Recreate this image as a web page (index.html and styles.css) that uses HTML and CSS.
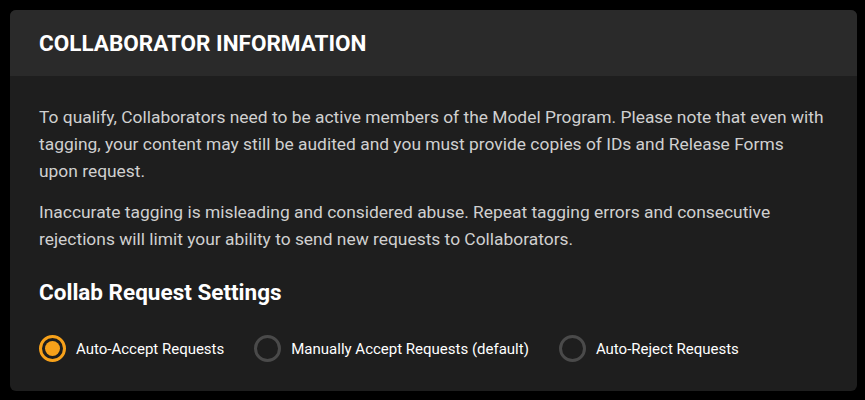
FILE: index.html
```html
<!DOCTYPE html>
<html lang="en">

<head>
  <meta charset="UTF-8" />
  <meta name="viewport" content="width=device-width, initial-scale=1.0" />
  <title>Collaborator Information</title>
  <link rel="stylesheet" href="styles.css">
</head>

<body>
  <div class="card">
    <div class="card-header">
      <h2>COLLABORATOR INFORMATION</h2>
    </div>
    <div class="card-body">
      <p>To qualify, Collaborators need to be active members of the Model Program. Please note that even with tagging, your content may still be audited and you must provide copies of IDs and Release Forms upon request.</p>
      <p>Inaccurate tagging is misleading and considered abuse. Repeat tagging errors and consecutive rejections will limit your ability to send new requests to Collaborators.</p>
      <h3>Collab Request Settings</h3>
      <div class="options">
        <label class="option">
          <input type="radio" name="collab" value="accept" checked>
          <span class="dot"></span>
          Auto-Accept Requests
        </label>
        <label class="option">
          <input type="radio" name="collab" value="manual">
          <span class="dot"></span>
          Manually Accept Requests (default)
        </label>
        <label class="option">
          <input type="radio" name="collab" value="reject">
          <span class="dot"></span>
          Auto-Reject Requests
        </label>
      </div>
    </div>
  </div>
</body>

</html>
```

FILE: styles.css
```css
body {
  margin: 0;
  padding: 10px;
  background: #000;
  font-family: Roboto, "Liberation Sans", Arial, sans-serif;
  color: #fff;
}

.card {
  width: 847px;
  height: 381px;
  background: #1e1e1e;
  border-radius: 6px;
  overflow: hidden;
}

.card-header {
  background: #2a2a2a;
  height: 66px;
  padding: 0 29px;
  display: flex;
  align-items: center;
}

h2 {
  margin: 0;
  font-size: 22.5px;
  font-weight: bold;
}

.card-body {
  padding: 28px 31px 0 29px;
}

p {
  margin: 0 0 14px;
  font-size: 17.4px;
  line-height: 27px;
  color: #d0d0d0;
}

h3 {
  margin: 26px 0 0;
  font-size: 22.5px;
  line-height: 27px;
  font-weight: bold;
}

.options {
  display: flex;
  gap: 30px;
  margin-top: 29px;
}

.option {
  display: flex;
  align-items: center;
  gap: 10px;
  font-size: 15px;
  cursor: pointer;
}

.option input {
  display: none;
}

.dot {
  width: 21px;
  height: 21px;
  border: 3px solid #4a4a4a;
  border-radius: 50%;
  display: flex;
  align-items: center;
  justify-content: center;
}

.option input:checked + .dot {
  border-color: #f7a11a;
}

.option input:checked + .dot::after {
  content: "";
  width: 15px;
  height: 15px;
  border-radius: 50%;
  background: #f7a11a;
}
```
